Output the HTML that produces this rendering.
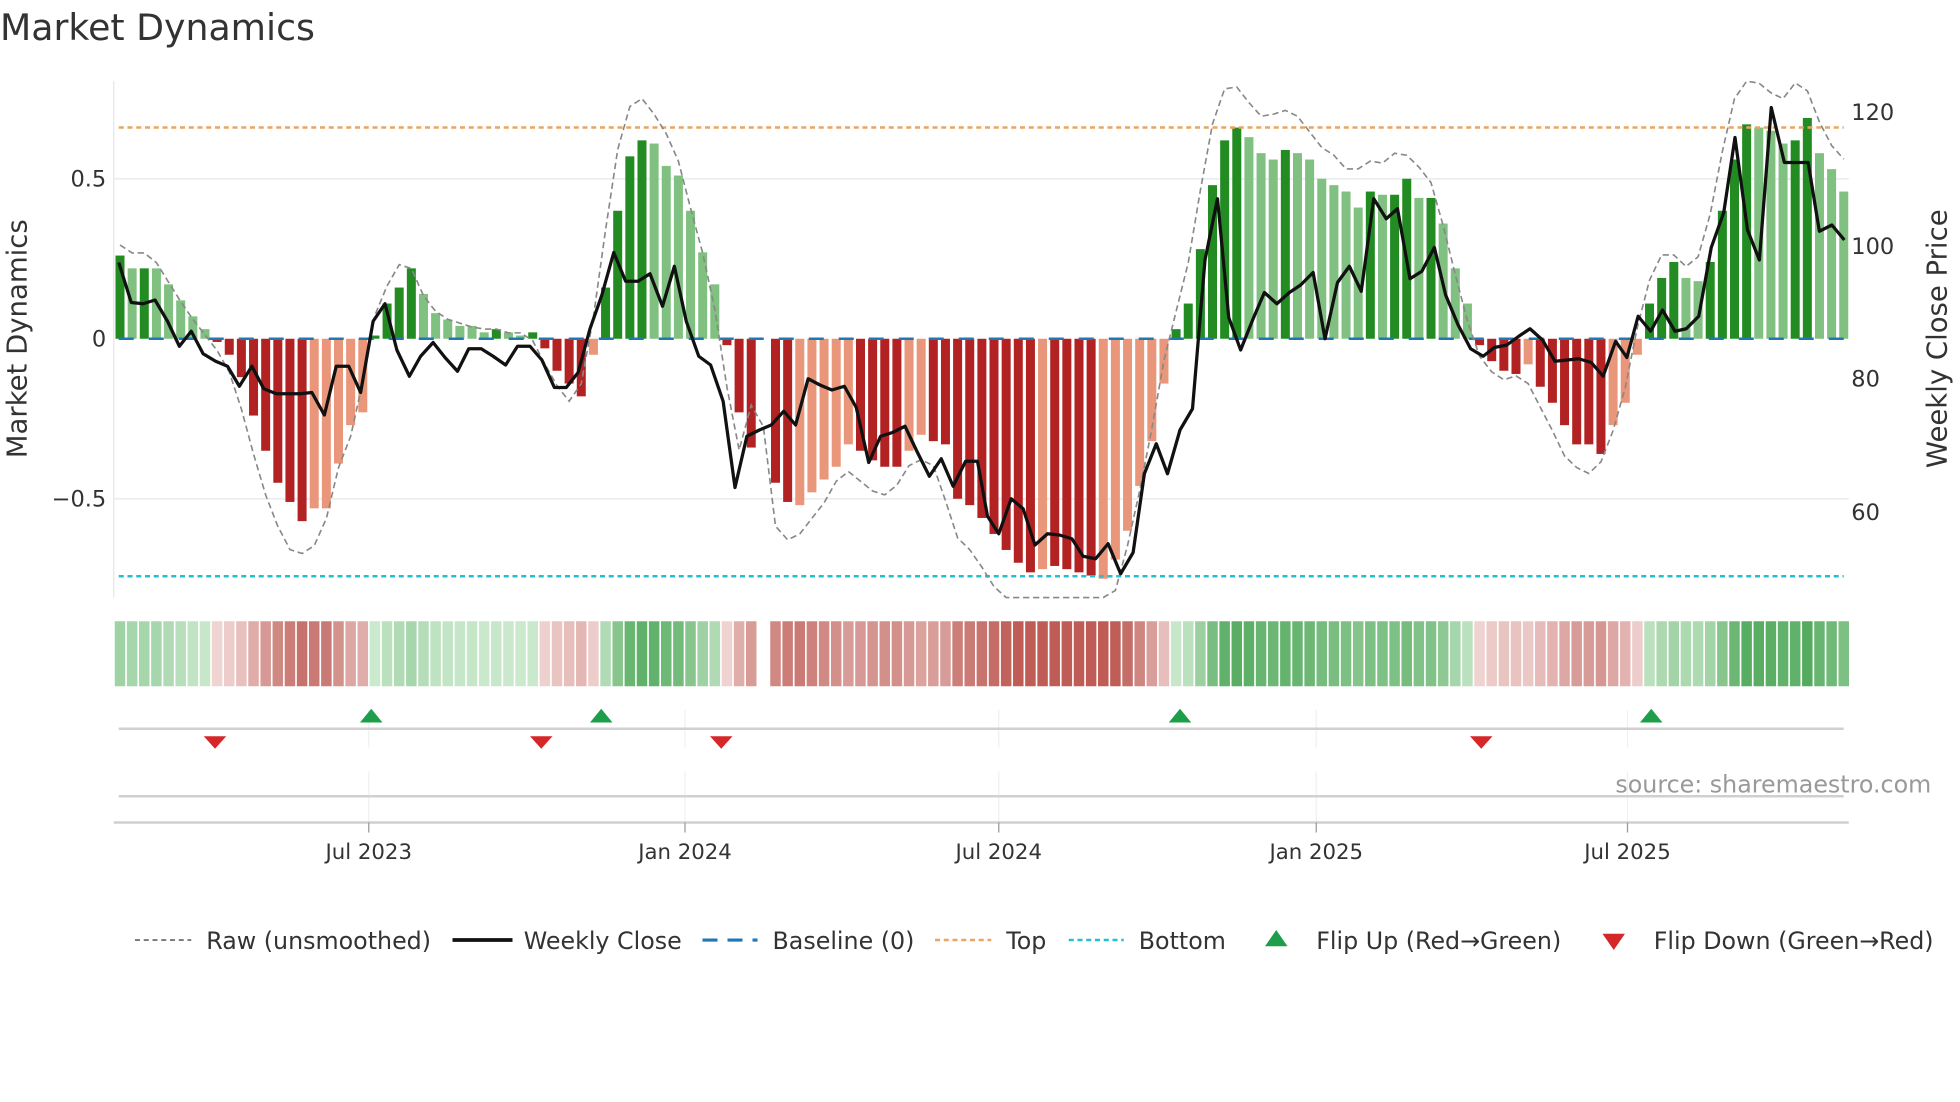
<!DOCTYPE html>
<html><head><meta charset="utf-8"><style>
html,body{margin:0;padding:0;background:#fff;}
svg{display:block;font-family:"DejaVu Sans","Liberation Sans",sans-serif;}
</style></head><body>
<svg id="s" width="1960" height="1102" viewBox="0 0 1568 881.6" xmlns="http://www.w3.org/2000/svg">
<rect width="1568" height="882" fill="#fff"/>
<text x="0" y="32" font-size="29" fill="#333">Market Dynamics</text>
<line x1="91" y1="65" x2="91" y2="478" stroke="#e6e6e6" stroke-width="1"/>
<line x1="91" y1="143" x2="1479" y2="143" stroke="#eceef2" stroke-width="1.5"/>
<line x1="91" y1="399" x2="1479" y2="399" stroke="#eceef2" stroke-width="1.5"/>
<g id="bars"></g>
<g id="heat"></g>
<line x1="95" y1="271" x2="1475" y2="271" stroke="#1f77b4" stroke-width="2" stroke-dasharray="12,12"/>
<line x1="95" y1="102" x2="1475" y2="102" stroke="#eaa561" stroke-width="2" stroke-dasharray="4,3"/>
<line x1="95" y1="461" x2="1475" y2="461" stroke="#22c0d4" stroke-width="2" stroke-dasharray="4,3"/>
<polyline id="raw" fill="none" stroke="#888" stroke-width="1.3" stroke-dasharray="5,3"/>
<polyline id="close" fill="none" stroke="#111" stroke-width="2.6" stroke-linejoin="round"/>
<g font-size="18" fill="#333">
<text x="85" y="149" text-anchor="end">0.5</text>
<text x="85" y="277" text-anchor="end">0</text>
<text x="85" y="405" text-anchor="end">−0.5</text>
<text x="1481" y="96">120</text>
<text x="1481" y="203">100</text>
<text x="1481" y="309">80</text>
<text x="1481" y="416">60</text>
</g>
<text transform="translate(21,271) rotate(-90)" text-anchor="middle" font-size="22" fill="#333">Market Dynamics</text>
<text transform="translate(1557,271) rotate(-90)" text-anchor="middle" font-size="22" fill="#333">Weekly Close Price</text>
<g stroke="#eef0f2" stroke-width="1">
<line x1="295" y1="568" x2="295" y2="598"/><line x1="548" y1="568" x2="548" y2="598"/><line x1="799" y1="568" x2="799" y2="598"/><line x1="1053" y1="568" x2="1053" y2="598"/><line x1="1302" y1="568" x2="1302" y2="598"/>
<line x1="295" y1="617" x2="295" y2="658"/><line x1="548" y1="617" x2="548" y2="658"/><line x1="799" y1="617" x2="799" y2="658"/><line x1="1053" y1="617" x2="1053" y2="658"/><line x1="1302" y1="617" x2="1302" y2="658"/>
</g>
<line x1="95" y1="583" x2="1475" y2="583" stroke="#d0d0d0" stroke-width="2"/>
<line x1="95" y1="637" x2="1475" y2="637" stroke="#d0d0d0" stroke-width="2"/>
<line x1="91" y1="658" x2="1479" y2="658" stroke="#d0d0d0" stroke-width="2"/>
<g stroke="#999" stroke-width="1"><line x1="295" y1="658" x2="295" y2="666"/><line x1="548" y1="658" x2="548" y2="666"/><line x1="799" y1="658" x2="799" y2="666"/><line x1="1053" y1="658" x2="1053" y2="666"/><line x1="1302" y1="658" x2="1302" y2="666"/></g>
<g fill="#1e9e4a">
<path d="M288,578 L297,567 L306,578Z"/><path d="M472,578 L481,567 L490,578Z"/><path d="M935,578 L944,567 L953,578Z"/><path d="M1312,578 L1321,567 L1330,578Z"/>
</g>
<g fill="#d62728">
<path d="M163,589 L181,589 L172,599Z"/><path d="M424,589 L442,589 L433,599Z"/><path d="M568,589 L586,589 L577,599Z"/><path d="M1176,589 L1194,589 L1185,599Z"/>
</g>
<text x="1545" y="634" text-anchor="end" font-size="19" fill="#999">source: sharemaestro.com</text>
<g font-size="17" fill="#333" text-anchor="middle">
<text x="295" y="687">Jul 2023</text><text x="548" y="687">Jan 2024</text><text x="799" y="687">Jul 2024</text><text x="1053" y="687">Jan 2025</text><text x="1302" y="687">Jul 2025</text>
</g>
<g font-size="19" fill="#333">
<line x1="108" y1="752" x2="153" y2="752" stroke="#777" stroke-width="1.5" stroke-dasharray="4,3"/>
<text x="165" y="759">Raw (unsmoothed)</text>
<line x1="362" y1="752" x2="410" y2="752" stroke="#111" stroke-width="3"/>
<text x="419" y="759">Weekly Close</text>
<line x1="562" y1="752" x2="606" y2="752" stroke="#1f77b4" stroke-width="2.5" stroke-dasharray="12,8"/>
<text x="618" y="759">Baseline (0)</text>
<line x1="748" y1="752" x2="793" y2="752" stroke="#eaa561" stroke-width="2" stroke-dasharray="4,3"/>
<text x="805" y="759">Top</text>
<line x1="855" y1="752" x2="899" y2="752" stroke="#22c0d4" stroke-width="2" stroke-dasharray="4,3"/>
<text x="911" y="759">Bottom</text>
<path d="M1012,757 L1021,744 L1030,757Z" fill="#1e9e4a"/>
<text x="1053" y="759">Flip Up (Red→Green)</text>
<path d="M1282,747 L1300,747 L1291,760Z" fill="#d62728"/>
<text x="1323" y="759">Flip Down (Green→Red)</text>
</g>
</svg>
<script>
var D="G.26 g.22 G.22 g.22 g.17 g.12 g.07 g.03 R-.01 R-.05 R-.12 R-.24 R-.35 R-.45 R-.51 R-.57 r-.53 r-.53 r-.39 r-.27 r-.23 G.01 G.11 G.16 G.22 g.14 g.08 g.06 g.04 g.04 g.02 G.03 g.02 g.01 G.02 R-.03 R-.10 R-.14 R-.18 r-.05 G.16 G.40 G.57 G.62 g.61 g.54 g.51 g.40 g.27 g.17 R-.02 R-.23 R-.34 N0 R-.45 R-.51 r-.52 r-.48 r-.44 r-.40 r-.33 R-.35 R-.38 R-.40 R-.40 r-.35 r-.30 R-.32 R-.33 R-.50 R-.52 R-.56 R-.61 R-.66 R-.70 R-.73 r-.72 R-.71 R-.72 R-.73 R-.74 r-.75 r-.69 r-.60 r-.46 r-.32 r-.14 G.03 G.11 G.28 G.48 G.62 G.66 g.63 g.58 g.56 G.59 g.58 g.56 g.50 g.48 g.46 g.41 G.46 g.45 G.45 G.50 g.44 G.44 g.36 g.22 g.11 R-.02 R-.07 R-.10 R-.11 r-.08 R-.15 R-.20 R-.27 R-.33 R-.33 R-.36 r-.27 r-.20 r-.05 G.11 G.19 G.24 g.19 g.18 G.24 G.40 G.56 G.67 g.66 g.65 g.61 G.62 G.69 g.58 g.53 g.46".split(" ");
var col={G:"#228b22",g:"#80c080",R:"#b22222",r:"#e9967a"};
var NS="http://www.w3.org/2000/svg",bars=document.getElementById("bars"),heat=document.getElementById("heat");
var n=D.length,step=(1475-96)/(n-1),raw=[];
function mix(a,b,t){return "rgb("+[0,1,2].map(function(k){return Math.round(a[k]+(b[k]-a[k])*t)}).join(",")+")";}
for(var i=0;i<n;i++){
 var t=D[i][0],v=parseFloat(D[i].slice(1)),x=96+i*step;
 if(t!="N"){
  var y0=271,y1=271-256*v,r=document.createElementNS(NS,"rect");
  r.setAttribute("x",x-3.6);r.setAttribute("width",7.2);
  r.setAttribute("y",Math.min(y0,y1));r.setAttribute("height",Math.max(1.5,Math.abs(y1-y0)));
  r.setAttribute("fill",col[t]);bars.appendChild(r);
  var h=document.createElementNS(NS,"rect");
  h.setAttribute("x",x-4.2);h.setAttribute("width",8.4);h.setAttribute("y",497);h.setAttribute("height",52);
  var a=Math.min(1,Math.abs(v)/0.7);
  h.setAttribute("fill",v>=0?mix([205,234,207],[82,170,92],a):mix([240,214,212],[190,92,85],a));
  heat.appendChild(h);
 }
 var vn=parseFloat((D[Math.min(n-1,i+1)]).slice(1));
 var ry=271-256*(v*0.5+vn*0.5)*1.22; if(ry<65)ry=65; if(ry>478)ry=478;
 raw.push(x.toFixed(1)+","+ry.toFixed(1));
}
document.getElementById("raw").setAttribute("points",raw.join(" "));
var c1=[190,210,229,248,268,287,306,325,345,364,383,403,422,442,461,480,499,519,538,558,577,597,616,635,655,673,693,712,732,750,770,789,809,828,848,867,887,906,925,944,963,982,1001,1021,1040,1060,1079,1098,1118,1137,1157,1176,1195,1215,1234,1254,1273,1293,1312,1331,1351,1370,1390,1409,1428,1448,1467,1487,1506,1525,1545,1564];
var y1=[210,242,243,240,257,277,265,283,289,293,309,293,311,315,315,315,314,332,293,293,314,257,243,280,301,285,274,286,297,279,279,285,292,277,277,288,310,310,298,263,236,202,225,225,219,245,213,257,285,292,321,390,349,344,340,329,340,303,308,312,309,326,370,349,346,341,361,381,367,389,369,369];
var c2=[12,30,50,69,88,108,127,147,165,185,205,225,245,263,282,300,320,340,360,380,398,417,437,455,475,495,513,533,552,572,591,610,630,650,668,688,707,727,745,765,785,805,823,843,862,880,900,920,940,958,978,997,1017,1035,1053,1073,1092,1112,1130,1150,1170,1190,1208,1228,1247,1266,1287,1305,1325,1343,1363,1383];
var y2=[413,427,399,407,436,427,428,431,445,447,435,459,442,379,355,379,344,327,208,159,254,280,255,234,243,234,228,218,271,226,213,233,159,175,167,223,217,198,236,260,279,285,278,276,269,263,272,289,288,287,290,301,273,286,253,265,248,265,263,253,198,170,110,184,208,86,130,130,130,185,180,192];
var pts=[];
for(var k=0;k<c1.length;k++)pts.push((c1[k]/2).toFixed(1)+","+y1[k]);
for(var k=0;k<c2.length;k++)pts.push((c2[k]/2+784).toFixed(1)+","+y2[k]);
document.getElementById("close").setAttribute("points",pts.join(" "));
</script>
</body></html>
